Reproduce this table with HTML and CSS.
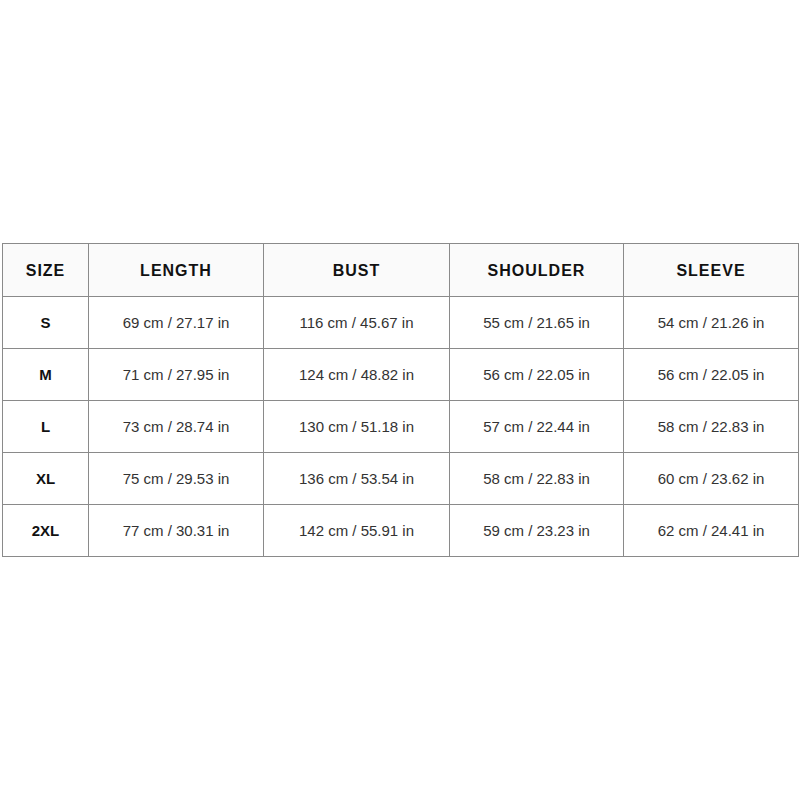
FILE: index.html
```html
<!DOCTYPE html>
<html>
<head>
<meta charset="utf-8">
<link rel="stylesheet" href="styles.css">
</head>
<body>
<table class="size-table">
  <colgroup>
    <col class="c1"><col class="c2"><col class="c3"><col class="c4"><col class="c5">
  </colgroup>
  <thead>
    <tr><th>SIZE</th><th>LENGTH</th><th>BUST</th><th>SHOULDER</th><th>SLEEVE</th></tr>
  </thead>
  <tbody>
    <tr><td class="sz">S</td><td>69 cm / 27.17 in</td><td>116 cm / 45.67 in</td><td>55 cm / 21.65 in</td><td>54 cm / 21.26 in</td></tr>
    <tr><td class="sz">M</td><td>71 cm / 27.95 in</td><td>124 cm / 48.82 in</td><td>56 cm / 22.05 in</td><td>56 cm / 22.05 in</td></tr>
    <tr><td class="sz">L</td><td>73 cm / 28.74 in</td><td>130 cm / 51.18 in</td><td>57 cm / 22.44 in</td><td>58 cm / 22.83 in</td></tr>
    <tr><td class="sz">XL</td><td>75 cm / 29.53 in</td><td>136 cm / 53.54 in</td><td>58 cm / 22.83 in</td><td>60 cm / 23.62 in</td></tr>
    <tr><td class="sz">2XL</td><td>77 cm / 30.31 in</td><td>142 cm / 55.91 in</td><td>59 cm / 23.23 in</td><td>62 cm / 24.41 in</td></tr>
  </tbody>
</table>
</body>
</html>
```

FILE: styles.css
```css
html, body {
  margin: 0;
  padding: 0;
  background: #ffffff;
}
body {
  padding-top: 243px;
  padding-left: 2px;
  font-family: "Liberation Sans", Arial, sans-serif;
}
.size-table {
  border-collapse: collapse;
  width: 796px;
  table-layout: fixed;
}
.c1 { width: 86px; }
.c2 { width: 175px; }
.c3 { width: 186px; }
.c4 { width: 174px; }
.c5 { width: 175px; }
.size-table th,
.size-table td {
  border: 1px solid #8a8a8a;
  text-align: center;
  padding: 0;
}
.size-table th {
  height: 50px;
  padding-top: 2px;
  background: #fafafa;
  color: #111;
  font-weight: bold;
  font-size: 16px;
  letter-spacing: 1px;
}
.size-table td {
  height: 51px;
  color: #333;
  font-size: 15px;
}
.size-table td.sz {
  color: #111;
  font-weight: bold;
}
```
